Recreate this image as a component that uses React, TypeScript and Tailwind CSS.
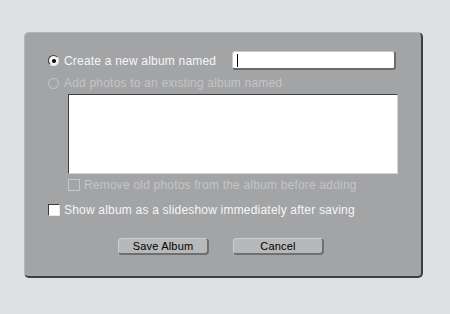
import React from "react";

const font = { fontFamily: '"Liberation Sans", Arial, sans-serif' };

function Radio({ checked, disabled }: { checked?: boolean; disabled?: boolean }) {
  if (disabled) {
    return (
      <span className="w-[11px] h-[11px] rounded-full border border-[#c6c7c9] shrink-0" />
    );
  }
  return (
    <span className="w-[11px] h-[11px] rounded-full border border-t-[#3a3a3a] border-l-[#3a3a3a] border-r-[#e8e8e8] border-b-[#e8e8e8] bg-[#f4f4f4] flex items-center justify-center shrink-0">
      {checked && <span className="w-[4px] h-[4px] rounded-full bg-black" />}
    </span>
  );
}

function Check({ disabled }: { disabled?: boolean }) {
  if (disabled) {
    return <span className="w-[12px] h-[12px] border border-[#c6c7c9] shrink-0" />;
  }
  return (
    <span className="w-[12px] h-[12px] border border-t-[#3a3a3a] border-l-[#3a3a3a] border-r-[#e8e8e8] border-b-[#e8e8e8] bg-white shrink-0" />
  );
}

function Button({ label }: { label: string }) {
  return (
    <button className="w-[91px] h-[17px] rounded-[4px] bg-[#b7b8ba] border-t border-l border-[#cdcecf] border-r-2 border-b-2 border-r-[#6e6f71] border-b-[#6e6f71] text-[11px] tracking-[0.2px] leading-none text-black flex items-center justify-center">
      {label}
    </button>
  );
}

export default function App() {
  return (
    <div className="w-[450px] h-[314px] bg-[#dfe0e2] pt-[32px] pl-[24px] overflow-hidden" style={font}>
      <div className="w-[399px] h-[246px] rounded-[5px] bg-[#a3a4a6] border-t border-l border-[#b4b5b7] border-r-2 border-b-2 border-r-[#3c3d3f] border-b-[#3c3d3f] pl-[23px] pt-[18px] flex flex-col text-[12px] tracking-[0.2px]">
        <div className="h-[19px] flex items-center">
          <Radio checked />
          <span className="ml-[5px] text-[#f6f6f6] w-[168px]">Create a new album named</span>
          <div className="w-[164px] h-[19px] rounded-[3px] bg-white border-t border-l border-t-[#c8c8c8] border-l-[#c8c8c8] border-r-2 border-b-2 border-r-[#6a6b6d] border-b-[#6a6b6d] flex items-center pl-[4px]">
            <span className="w-[1px] h-[13px] bg-black" />
          </div>
        </div>
        <div className="h-[14px] mt-[6px] flex items-center">
          <Radio disabled />
          <span className="ml-[5px] text-[#c4c5c7]">Add photos to an existing album named</span>
        </div>
        <div className="ml-[20px] mt-[4px] w-[330px] h-[80px] bg-white border border-t-[#404040] border-l-[#404040] border-r-[#d6d6d6] border-b-[#d6d6d6]" />
        <div className="ml-[20px] mt-[4px] h-[14px] flex items-center">
          <Check disabled />
          <span className="ml-[4px] text-[#c4c5c7]">Remove old photos from the album before adding</span>
        </div>
        <div className="mt-[11px] h-[14px] flex items-center">
          <Check />
          <span className="ml-[4px] text-[#f6f6f6]">Show album as a slideshow immediately after saving</span>
        </div>
        <div className="mt-[21px] ml-[70px] flex gap-[24px]">
          <Button label="Save Album" />
          <Button label="Cancel" />
        </div>
      </div>
    </div>
  );
}
